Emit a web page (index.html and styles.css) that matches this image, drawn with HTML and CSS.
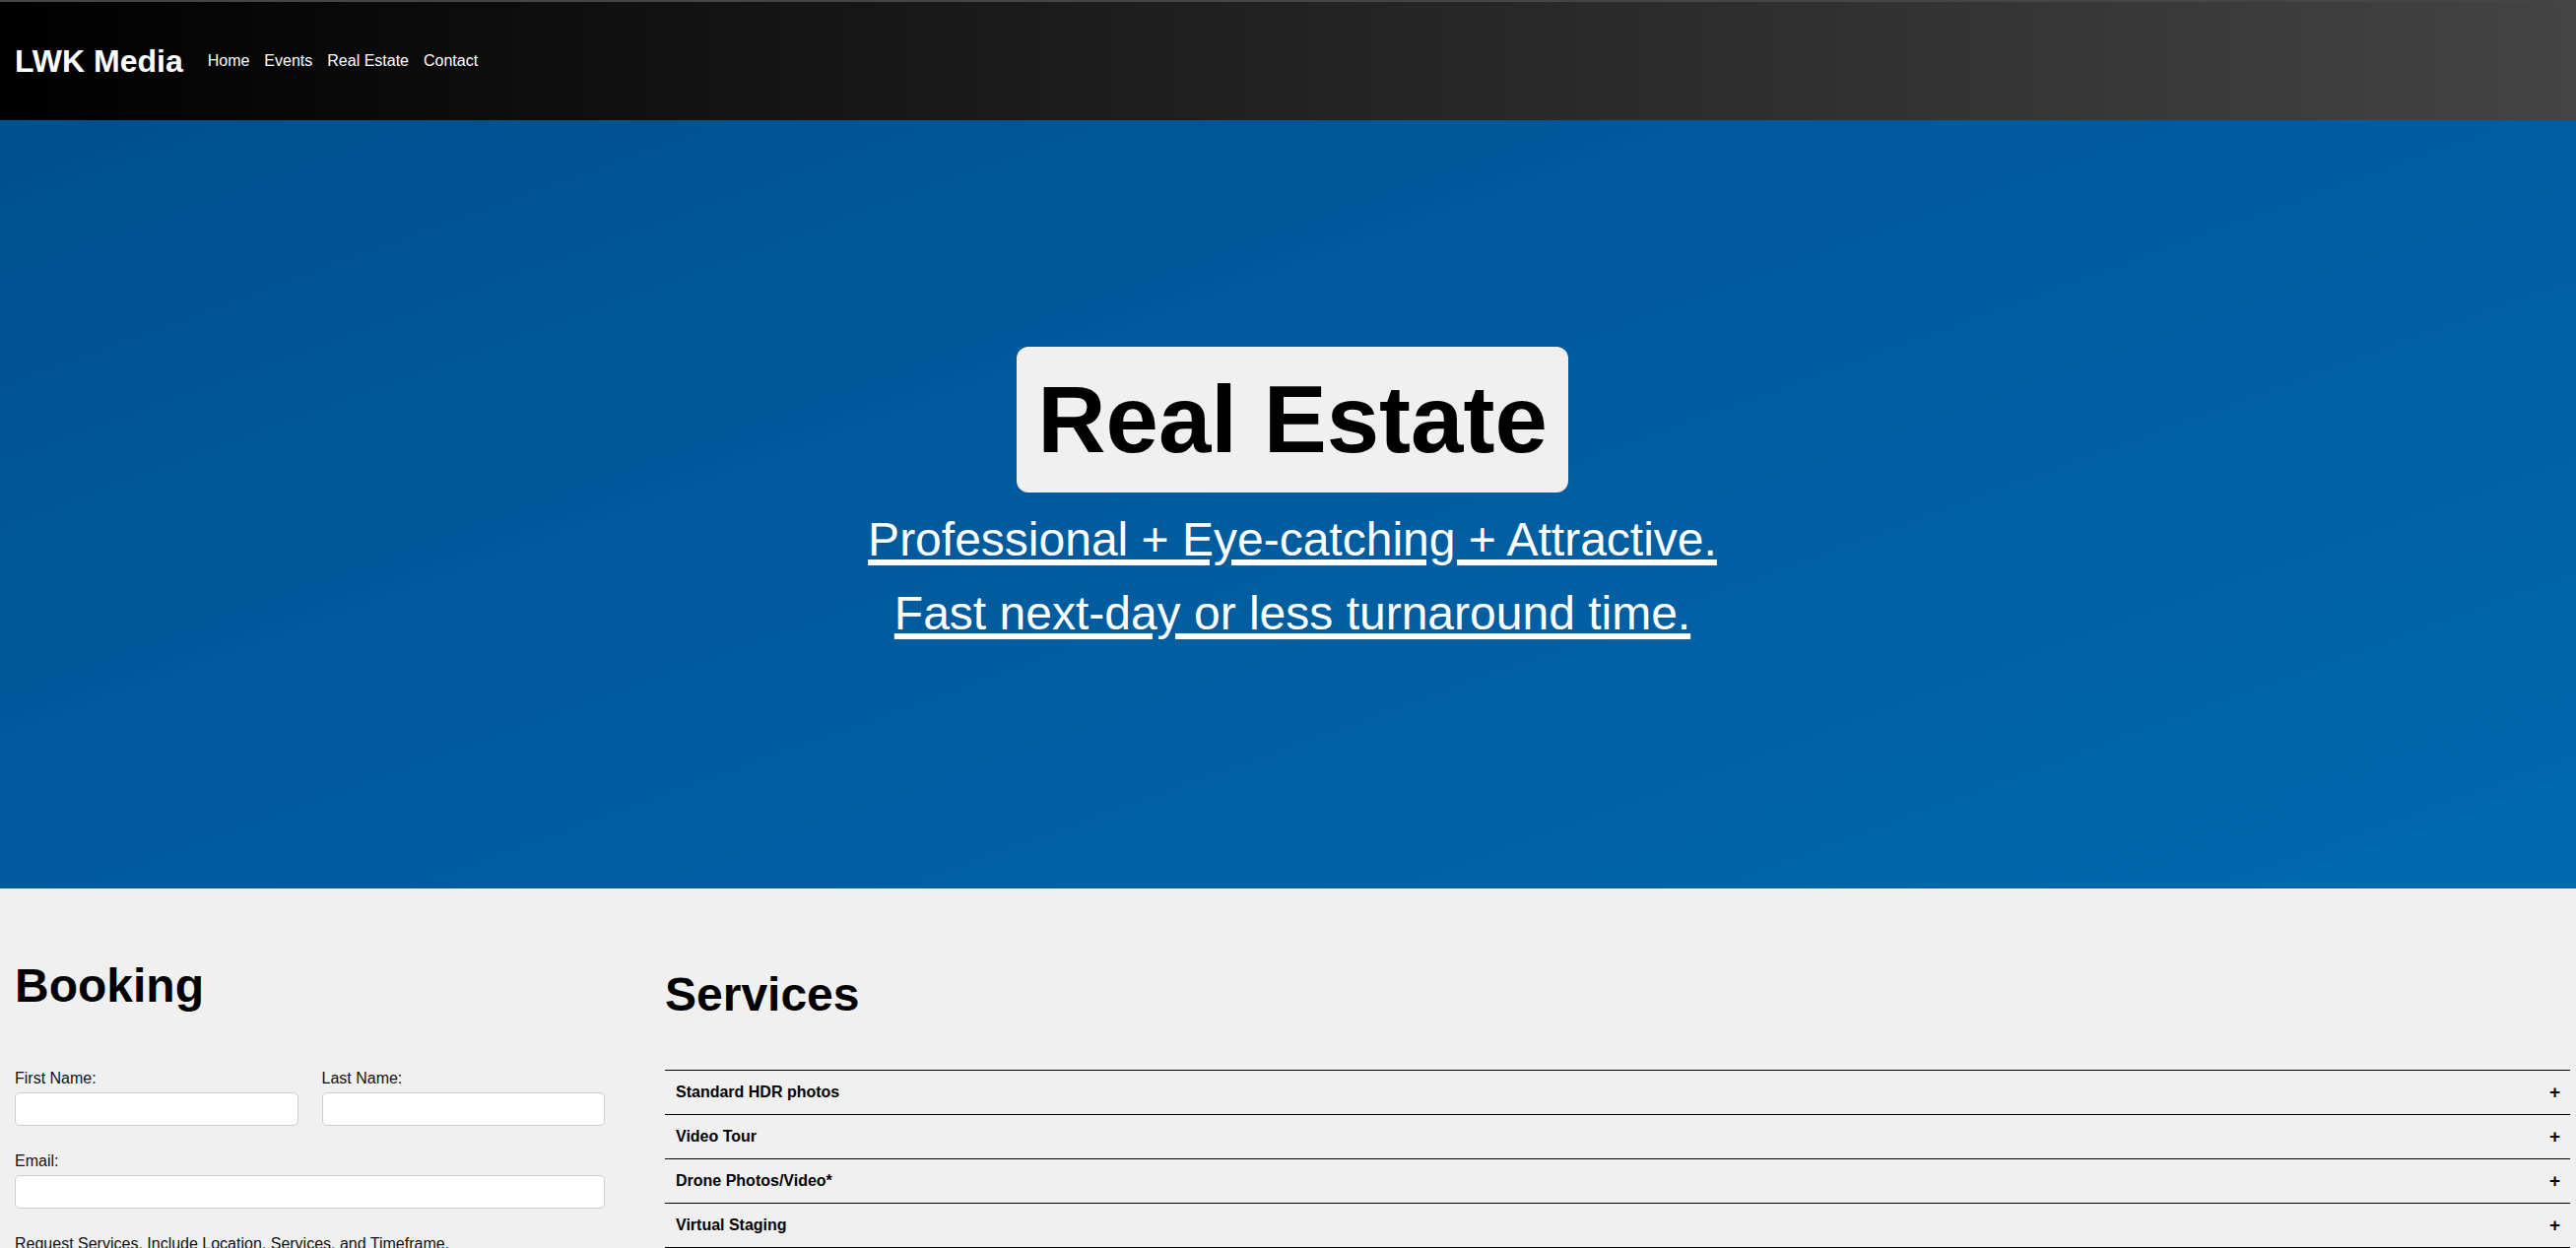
FILE: index.html
```html
<!DOCTYPE html>
<html lang="en">
<head>
<meta charset="utf-8">
<title>LWK Media - Real Estate</title>
<link rel="stylesheet" href="styles.css">
</head>
<body>
<header class="site-header">
  <div class="brand">LWK Media</div>
  <nav class="nav">
    <a href="#">Home</a>
    <a href="#">Events</a>
    <a href="#">Real Estate</a>
    <a href="#">Contact</a>
  </nav>
</header>

<section class="hero">
  <h1 class="hero-title">Real Estate</h1>
  <p class="hero-line">Professional + Eye-catching + Attractive.</p>
  <p class="hero-line">Fast next-day or less turnaround time.</p>
</section>

<main class="content">
  <section class="booking">
    <h2 class="booking-title">Booking</h2>
    <form class="form">
      <div class="form-row">
        <div class="field">
          <label class="label" for="first">First Name:</label>
          <input class="input" id="first" type="text">
        </div>
        <div class="field">
          <label class="label" for="last">Last Name:</label>
          <input class="input" id="last" type="text">
        </div>
      </div>
      <div class="field">
        <label class="label" for="email">Email:</label>
        <input class="input" id="email" type="email">
      </div>
      <div class="field">
        <label class="label" for="msg">Request Services. Include Location, Services, and Timeframe.</label>
        <textarea class="textarea" id="msg"></textarea>
      </div>
    </form>
  </section>

  <section class="services">
    <h2 class="services-title">Services</h2>
    <div class="service-list">
      <div class="service"><span>Standard HDR photos</span><span class="plus">+</span></div>
      <div class="service"><span>Video Tour</span><span class="plus">+</span></div>
      <div class="service"><span>Drone Photos/Video*</span><span class="plus">+</span></div>
      <div class="service"><span>Virtual Staging</span><span class="plus">+</span></div>
    </div>
  </section>
</main>
</body>
</html>
```

FILE: styles.css
```css
* { box-sizing: border-box; }

html, body {
  margin: 0;
  padding: 0;
}

body {
  background: #f0f0f0;
  font-family: "Liberation Sans", Arial, sans-serif;
  color: #000;
}

.site-header {
  height: 122px;
  border-top: 2px solid #454545;
  background: linear-gradient(to right, #000000, #444444);
  display: flex;
  align-items: center;
  padding: 0 15px;
}

.brand {
  color: #fff;
  font-size: 32px;
  font-weight: bold;
  line-height: 37px;
}

.nav {
  display: flex;
  gap: 15px;
  margin-left: 25px;
}

.nav a {
  color: #fff;
  text-decoration: none;
  font-size: 16px;
  line-height: 18px;
}

.hero {
  height: 780px;
  background: linear-gradient(160deg, #00508f 0%, #005c9f 50%, #0069ae 100%);
  display: flex;
  flex-direction: column;
  align-items: center;
  padding-top: 230px;
  padding-left: 9px;
  gap: 20px;
}

.hero-title {
  margin: 0;
  background: #f0f0f0;
  border-radius: 12px;
  padding: 19px 21px;
  font-size: 96px;
  line-height: 110px;
  font-weight: bold;
  color: #000;
}

.hero-line {
  margin: 0;
  color: #fff;
  font-size: 48px;
  line-height: 55px;
  text-decoration: underline;
  text-decoration-thickness: 6px;
  text-underline-offset: 4px;
}

.content {
  display: flex;
  gap: 61px;
  padding: 0 6px 0 15px;
}

.booking {
  width: 599px;
  flex: none;
}

.booking-title {
  margin: 71px 0 58px;
  font-size: 48px;
  line-height: 55px;
  font-weight: bold;
}

.form {
  display: flex;
  flex-direction: column;
  gap: 27px;
}

.form-row {
  display: grid;
  grid-template-columns: 1fr 1fr;
  gap: 24px;
}

.field {
  display: flex;
  flex-direction: column;
  gap: 5px;
}

.label {
  font-size: 16px;
  line-height: 18px;
  color: #111;
}

.input {
  height: 34px;
  border: 1px solid #cccccc;
  border-radius: 5px;
  background: #fff;
  font: inherit;
  padding: 0 8px;
}

.textarea {
  height: 120px;
  border: 1px solid #cccccc;
  border-radius: 5px;
  background: #fff;
  font: inherit;
  resize: vertical;
}

.services {
  flex: 1;
}

.services-title {
  margin: 80px 0 49px;
  font-size: 48px;
  line-height: 55px;
  font-weight: bold;
}

.service-list {
  border-bottom: 1px solid #000;
}

.service {
  height: 45px;
  border-top: 1px solid #000;
  display: flex;
  align-items: center;
  justify-content: space-between;
  padding: 0 10px 0 11px;
  font-size: 16px;
  font-weight: bold;
}

.plus {
  font-size: 19px;
  line-height: 20px;
  font-weight: bold;
}
```
